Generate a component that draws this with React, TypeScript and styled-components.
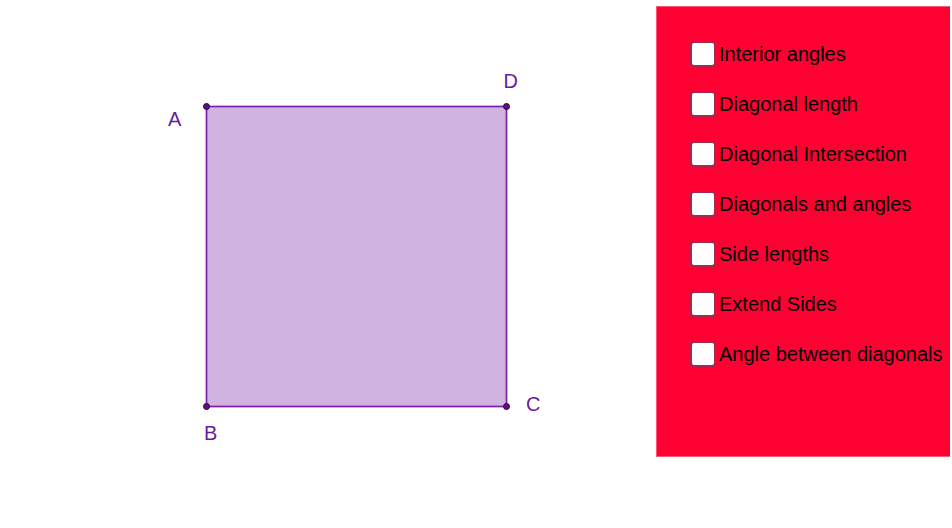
import styled, { createGlobalStyle } from 'styled-components';

const GlobalStyle = createGlobalStyle`
  html, body {
    margin: 0;
    padding: 0;
    background: #ffffff;
  }
  body {
    font-family: "Liberation Sans", Arial, sans-serif;
  }
`;

const options = [
  'Interior angles',
  'Diagonal length',
  'Diagonal Intersection',
  'Diagonals and angles',
  'Side lengths',
  'Extend Sides',
  'Angle between diagonals',
];

const vertices = [
  { name: 'A', x: 206.5, y: 106.5, lx: 168, ly: 126 },
  { name: 'D', x: 506.5, y: 106.5, lx: 503.5, ly: 88 },
  { name: 'B', x: 206.5, y: 406.5, lx: 204, ly: 440 },
  { name: 'C', x: 506.5, y: 406.5, lx: 526, ly: 411 },
];

const App = () => {
  return (
    <Page>
      <GlobalStyle />
      <Canvas>
        <svg width="656" height="528" viewBox="0 0 656 528">
          <rect
            x="206.5"
            y="106.5"
            width="300"
            height="300"
            fill="#d1b3e1"
            stroke="#7a1fa8"
            strokeWidth="1.7"
          />
          {vertices.map((v) => (
            <circle
              key={v.name}
              cx={v.x}
              cy={v.y}
              r="3"
              fill="#5e0f86"
              stroke="#1c0a24"
              strokeWidth="1"
            />
          ))}
          {vertices.map((v) => (
            <PointLabel key={'l' + v.name} x={v.lx} y={v.ly}>
              {v.name}
            </PointLabel>
          ))}
        </svg>
      </Canvas>
      <Panel>
        {options.map((label) => (
          <Row key={label}>
            <Box />
            <Label>{label}</Label>
          </Row>
        ))}
      </Panel>
    </Page>
  );
};

const Page = styled.div`
  width: 952px;
  height: 528px;
  display: flex;
  align-items: flex-start;
  overflow: hidden;
  background: #ffffff;
`;

const Canvas = styled.div`
  width: 656px;
  height: 528px;
  flex-shrink: 0;

  svg {
    display: block;
  }
`;

const PointLabel = styled.text`
  font-family: "Liberation Sans", Arial, sans-serif;
  font-size: 20px;
  fill: #6a1aa0;
`;

const Panel = styled.div`
  margin-top: 6px;
  width: 294px;
  height: 451px;
  box-sizing: border-box;
  background: #ff0033;
  border-top: 1px solid #ff5577;
  border-left: 1px solid #ff5577;
  border-bottom: 1px solid #ff5577;
  padding: 34px 0 0 33px;
  display: flex;
  flex-direction: column;
  gap: 24px;
`;

const Row = styled.div`
  display: flex;
  align-items: center;
  height: 26px;
  white-space: nowrap;
`;

const Box = styled.span`
  width: 26px;
  height: 26px;
  box-sizing: border-box;
  border: 2px solid #a3294f;
  border-radius: 4px;
  background: #ffffff;
  flex-shrink: 0;
`;

const Label = styled.span`
  margin-left: 3px;
  font-size: 20px;
  color: #000000;
  line-height: 26px;
`;

export default App;
